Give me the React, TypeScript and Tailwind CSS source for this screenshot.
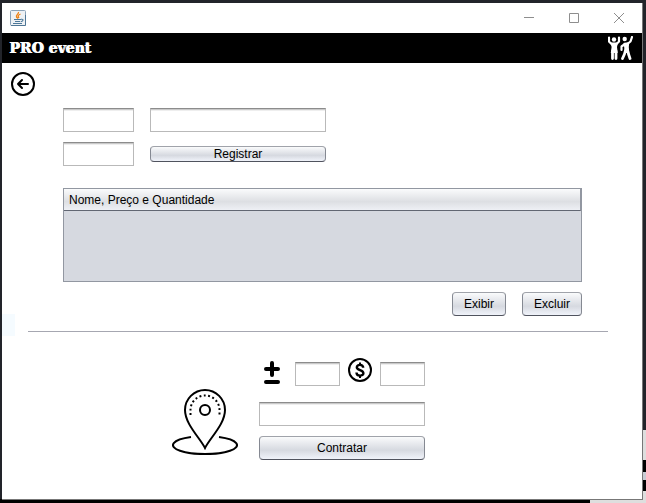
import type { ButtonHTMLAttributes, InputHTMLAttributes } from "react";
import { clsx } from "clsx";

function Field({ className, ...props }: InputHTMLAttributes<HTMLInputElement>) {
  return (
    <input
      type="text"
      className={clsx(
        "block h-6 min-w-0 border border-[#b9b9b9] border-t-[#8c8c8c] bg-white px-1 text-[12px] shadow-[inset_0_1px_0_#c9c9c9,inset_0_2px_0_#eeeeee] outline-none",
        className,
      )}
      {...props}
    />
  );
}

function NimbusButton({ className, ...props }: ButtonHTMLAttributes<HTMLButtonElement>) {
  return (
    <button
      type="button"
      className={clsx(
        "flex items-center justify-center rounded-[4px] border border-[#858992] border-t-[#a0a3aa] border-b-[#50535e] bg-linear-to-b from-[#fafbfc] via-[#d6d9e0] via-60% to-[#f0f3fa] text-[12px] leading-4 text-black",
        className,
      )}
      {...props}
    />
  );
}

function JavaIcon() {
  return (
    <svg className="size-4" viewBox="0 0 16 16" fill="none" aria-hidden="true">
      <rect x=".5" y=".5" width="15" height="15" rx="1" fill="#eef1f4" stroke="#8aa2b8" />
      <path d="M1 15.500h14.500V5" stroke="#4f7695" />
      <path d="M8.500 2C9 4 5.500 5 6.500 7L8 8.500M10.500 4C8 5 7.500 6 9 8" stroke="#ee8215" strokeWidth="1.300" />
      <path d="M4 9.500h7M5 11.500h5M3 13.500h9M11 9.300c3-.6 2.500 2-.3 2.500" stroke="#4c7899" strokeWidth="1.100" />
    </svg>
  );
}

function PeopleIcon() {
  return (
    <svg className="h-6 w-[25px]" viewBox="0 0 25 24" aria-hidden="true">
      <g fill="none" stroke="white" strokeLinecap="round" strokeLinejoin="round">
        <path d="M1 1.500v4L4 8.500M11 1.500v4L8 8.500" strokeWidth="2.200" />
        <path d="M13.500 14v-3.500L17 8M20 7.500l2.500-2L24 1" strokeWidth="2.200" />
        <path d="M4.500 15v7.500M8 15v7.500M17.300 15l-.8 3-2 4.500M19.500 14l1 4 1.500 4.500" strokeWidth="2.800" />
      </g>
      <path d="M2.500 6.500h7.500L9 11l.7 6H2.800l.8-6zM15.500 7l5.800-1-.5 5 .5 6h-5.200l.2-5z" fill="white" />
      <circle cx="6" cy="3.500" r="2.200" fill="white" />
      <circle cx="16.700" cy="3" r="2.200" fill="white" />
    </svg>
  );
}

function BackIcon() {
  return (
    <svg className="size-6" viewBox="0 0 24 24" fill="none" stroke="black" strokeWidth="2" aria-hidden="true">
      <circle cx="12" cy="12" r="11" />
      <path d="M17 12H7M11 8l-4 4 4 4" strokeLinecap="round" strokeLinejoin="round" />
    </svg>
  );
}

function PlusMinusIcon() {
  return (
    <svg className="h-6 w-4 overflow-visible" viewBox="0 0 16 24" fill="none" stroke="black" strokeWidth="4" strokeLinecap="round" aria-hidden="true">
      <path d="M8 1v12M2 7h12M2 20h12" />
    </svg>
  );
}

function DollarIcon() {
  return (
    <svg className="size-6" viewBox="0 0 24 24" fill="none" stroke="black" aria-hidden="true">
      <circle cx="12" cy="12" r="11" strokeWidth="2" />
      <path d="M15.200 9.800C15.200 6 8.800 6 8.800 9.200c0 3.300 6.600 2.500 6.600 6 0 3.400-6.900 3.400-6.900-.8" strokeWidth="2.400" />
      <path d="M12 4.500V7M12 17.500V20" strokeWidth="2" />
    </svg>
  );
}

function PinIcon() {
  return (
    <svg className="size-[66px]" viewBox="0 0 66 66" fill="none" stroke="black" strokeWidth="2" aria-hidden="true">
      <path d="M33 59C28 49 13 35 13 21a20 20 0 0 1 40 0C53 35 38 49 33 59Z" />
      <circle cx="33" cy="21" r="5" />
      <path d="M18.500 26v-5a14.500 14.500 0 0 1 29 0v5" strokeDasharray="1.900 2.500" />
      <path d="M19 48A32 9 0 1 0 47 48" />
    </svg>
  );
}

export default function App() {
  return (
    <div className="relative isolate flex h-screen min-h-[503px] flex-col bg-[#22242a] pt-[3px] pr-[3px] pb-[3px] pl-[2px] font-['Liberation_Sans',Arial,sans-serif] text-[12px] text-black">
      <div className="absolute right-0 bottom-0 -z-10 flex h-[73px] w-14 flex-col bg-[#dedede] pt-[30px]">
        <div className="flex h-[31px] items-center justify-end bg-black">
          <div className="h-2 w-[3px] bg-[#c8ccd4]" />
        </div>
      </div>
      <div className="absolute bottom-0 left-0 -z-10 h-1 w-[calc(100%-56px)] bg-black" />

      <section className="flex grow flex-col border-r border-b border-[#777777] bg-white">
        <div className="flex h-[30px] items-center justify-between pr-[18px] pl-2">
          <JavaIcon />
          <div className="flex items-center gap-[35px] text-[#8e8e8e]">
            <button type="button" aria-label="Minimizar">
              <svg className="size-[10px]" viewBox="0 0 10 10" stroke="currentColor"><path d="M0 4.500h10" /></svg>
            </button>
            <button type="button" aria-label="Maximizar">
              <svg className="size-[10px]" viewBox="0 0 10 10" fill="none" stroke="currentColor"><path d="M.5.5h9v9h-9z" /></svg>
            </button>
            <button type="button" aria-label="Fechar">
              <svg className="size-[10px]" viewBox="0 0 10 10" stroke="currentColor"><path d="m0 0 10 10M10 0 0 10" /></svg>
            </button>
          </div>
        </div>

        <header className="flex h-[30px] items-center justify-between bg-black pr-[9px] pl-[7px] text-white">
          <h1 className="font-['DejaVu_Serif',serif] text-[14px] leading-5 font-black [text-shadow:1px_0_0_white]">PRO event</h1>
          <PeopleIcon />
        </header>

        <main className="relative pt-[9px]">
          <div className="absolute top-[251px] left-0 h-[22px] w-[13px] bg-[#f5fbff]" />
          <button type="button" aria-label="Voltar" className="ml-[9px] block">
            <BackIcon />
          </button>

          <div className="mt-3 mr-[60px] ml-[61px]">
            <form className="grid grid-cols-[71px_176px] items-center gap-x-4 gap-y-[10px]">
              <Field aria-label="Preço" />
              <Field aria-label="Nome" />
              <Field aria-label="Quantidade" />
              <NimbusButton className="h-4">Registrar</NimbusButton>
            </form>

            <div className="mt-[22px] h-[94px] border border-[#9297a1] bg-[#d6d9e0]">
              <table className="w-full border-separate border-spacing-0">
                <thead>
                  <tr>
                    <th className="h-[22px] border-r border-b border-[#9297a1] border-b-[#626773] bg-linear-to-b from-[#fafbfc] via-[#dddfe3] via-60% to-[#eef0f5] px-[5px] text-left font-normal">
                      Nome, Preço e Quantidade
                    </th>
                  </tr>
                </thead>
              </table>
            </div>

            <div className="mt-[10px] flex justify-end gap-4">
              <NimbusButton className="h-6 w-[54px]">Exibir</NimbusButton>
              <NimbusButton className="h-6 w-[60px]">Excluir</NimbusButton>
            </div>
          </div>

          <hr className="mt-[15px] mr-[34px] ml-[26px] border-[#a6a7b1]" />

          <form className="mt-[26px] ml-[170px] flex gap-[21px]">
            <div className="pt-[31px]">
              <PinIcon />
            </div>
            <div className="w-[166px]">
              <div className="flex h-7 items-end justify-between pl-[5px]">
                <PlusMinusIcon />
                <Field aria-label="Quantidade do item" className="ml-[7px] w-[45px]" />
                <div className="self-start">
                  <DollarIcon />
                </div>
                <Field aria-label="Valor" className="w-[45px]" />
              </div>
              <Field aria-label="Endereço" className="mt-4 w-full" />
              <NimbusButton className="mt-[10px] h-6 w-full">Contratar</NimbusButton>
            </div>
          </form>
        </main>
      </section>
    </div>
  );
}
